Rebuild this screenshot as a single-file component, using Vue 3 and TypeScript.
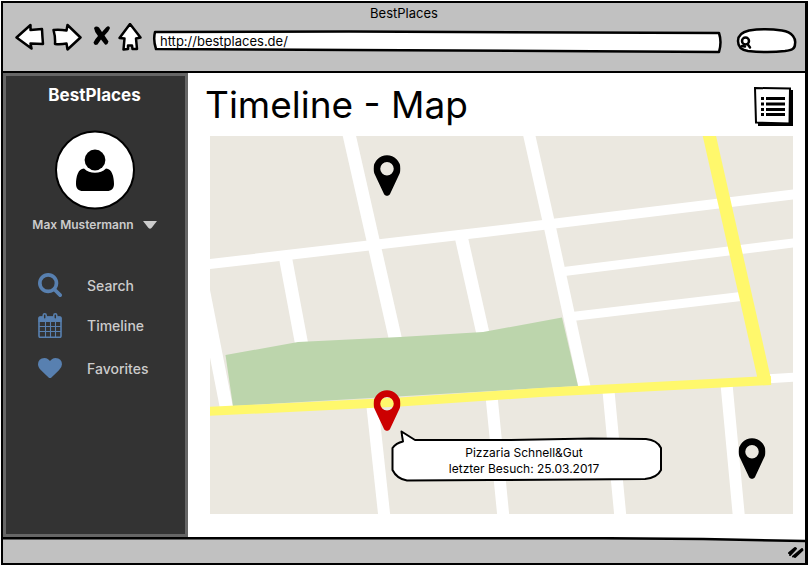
<script setup lang="ts">
import { computed, ref } from 'vue'

interface Place {
  id: number
  label: string
  x: number
  y: number
  lastVisit?: string
}

interface NavItem {
  label: string
  icon: 'search' | 'calendar' | 'heart'
}

const MAP_WIDTH = 583
const MAP_HEIGHT = 378

const url = ref('http://bestplaces.de/')
const query = ref('')

const navGroups: NavItem[][] = [
  [
    { label: 'Search', icon: 'search' },
    { label: 'Timeline', icon: 'calendar' },
  ],
  [{ label: 'Favorites', icon: 'heart' }],
]

const places: Place[] = [
  { id: 1, label: 'Place 1', x: 177, y: 60 },
  { id: 2, label: 'Pizzaria Schnell&Gut', x: 177, y: 295, lastVisit: '25.03.2017' },
  { id: 3, label: 'Place 3', x: 542, y: 343 },
]

const selectedId = ref(2)
const selected = computed(() => places.find((p) => p.id === selectedId.value && p.lastVisit))

const position = (p: Place) => ({
  left: `${(p.x / MAP_WIDTH) * 100}%`,
  top: `${(p.y / MAP_HEIGHT) * 100}%`,
})
</script>

<template>
  <div class="window">
    <header class="chrome">
      <div class="chrome-title">BestPlaces</div>
      <div class="toolbar">
        <button class="tool" type="button" aria-label="Back">
          <svg width="31" height="32" viewBox="15 23 31 32">
            <path class="ink" d="M16.5 37.5 L30.5 25 L30.5 30 L42 29 Q42.3 36 43 44 L30.5 43.5 L31.5 48.5 Q24 43 16.5 37.5Z" />
          </svg>
        </button>
        <button class="tool" type="button" aria-label="Forward">
          <svg width="31" height="32" viewBox="51 23 31 32">
            <path class="ink" d="M53.5 30 Q60 29.5 66.5 30.5 L67.5 25 L80.5 37.5 L67.5 49.5 L66.5 43.5 Q61 44.5 55 44 Q55.5 37 53.5 30Z" />
          </svg>
        </button>
        <button class="tool" type="button" aria-label="Stop">
          <svg width="24" height="32" viewBox="87 23 24 32">
            <path d="M94 28 Q96 25.500 99 27.500 L102 32 L106 27.500 Q109 25 110 28 Q109 31 104.500 35.500 L108.500 41.500 Q107.500 45.500 105 44.500 L101 39.500 L97.500 44.500 Q94 46 93.500 42.500 Q95 39 98 36 Q94.500 32 94 28Z" />
          </svg>
        </button>
        <button class="tool" type="button" aria-label="Home">
          <svg width="28" height="32" viewBox="116 23 28 32">
            <path class="ink" d="M130 24 L140.5 37.5 L136 38.5 L137 49 L132.5 49 L132 45.5 L128 45.5 L128 49 L123.5 49.5 L124.5 38.5 L119.5 38Z" />
          </svg>
        </button>
        <label class="address">
          <svg class="stretch" viewBox="0 0 575 32" preserveAspectRatio="none" aria-hidden="true">
            <path class="ink" d="M6 9 Q4 17 7 26 L200 27 L570 29 Q573 19 570 10 L200 8.5Z" />
          </svg>
          <input v-model="url" type="text" aria-label="Address" />
        </label>
        <label class="finder">
          <svg class="stretch" viewBox="0 0 63 32" preserveAspectRatio="none" aria-hidden="true">
            <path class="ink" d="M14 7.5 Q30 5 47 7.5 C58 9 61 16 60 21 C60 26 57 27 50 28 Q33 30 13 28 C6 27 3 23 3 18 C3 12 7 9 14 7.5Z" />
            <circle class="ink" cx="10.5" cy="18" r="3.5" />
            <path class="ink" d="M12.5 21 L15 24.500 M7 23 L10 23.500" />
          </svg>
          <input v-model="query" type="search" aria-label="Web search" />
        </label>
      </div>
    </header>

    <div class="page">
      <aside class="sidebar">
        <div class="brand">BestPlaces</div>
        <svg class="avatar" width="80" height="80" viewBox="55 130 80 80" role="img" aria-label="Profile picture">
          <ellipse cx="95" cy="170" rx="39" ry="38.5" fill="#fff" stroke="#000" stroke-width="2" />
          <circle cx="95" cy="160" r="10.4" />
          <path d="M84 168.5 Q88.5 172.8 95 172.8 T106 168.5 C112 168.5 114 177 114 184 C114 188.5 111.5 191 107 191 H83 C78.5 191 76 188.5 76 184 C76 177 78 168.5 84 168.5Z" />
        </svg>
        <button class="account" type="button">
          Max Mustermann
          <svg width="14" height="8" viewBox="0 0 14 8" aria-hidden="true">
            <path d="M0 0 H14 L8.5 7 Q7 8.5 5.5 7Z" fill="#ccc" />
          </svg>
        </button>
        <nav class="menu">
          <ul v-for="(group, g) in navGroups" :key="g">
            <li v-for="item in group" :key="item.label">
              <a href="#">
                <svg v-if="item.icon === 'search'" class="icon" viewBox="64 128 1664 1664">
                  <path d="M1216 832q0-185-131.5-316.5t-316.5-131.5-316.5 131.5-131.5 316.5 131.5 316.5 316.5 131.5 316.5-131.5 131.5-316.5zm512 832q0 52-38 90t-90 38q-54 0-90-38l-343-342q-179 124-399 124-143 0-273.5-55.5t-225-150-150-225-55.5-273.5 55.5-273.5 150-225 225-150 273.5-55.5 273.5 55.5 225 150 150 225 55.5 273.5q0 220-124 399l343 343q37 37 37 90z" />
                </svg>
                <svg v-else-if="item.icon === 'calendar'" class="icon" viewBox="0 0 24 25">
                  <path d="M2 3.5 H22 Q23.5 3.5 23.5 5 V9 H0.5 V5 Q0.5 3.5 2 3.5Z" />
                  <g fill="none" stroke="currentColor">
                    <rect x="1" y="4" width="22" height="20.3" rx="1.2" stroke-width="1.6" />
                    <path d="M7.5 8 V24 M12.5 8 V24 M17.5 8 V24 M1 13.5 H23 M1 18.5 H23" stroke-width="1.1" />
                  </g>
                  <g fill="#333" stroke="currentColor" stroke-width="1.5">
                    <rect x="5.2" y="0.8" width="3" height="5.5" rx="1.5" />
                    <rect x="15.8" y="0.8" width="3" height="5.5" rx="1.5" />
                  </g>
                </svg>
                <svg v-else class="icon" viewBox="0 128 1792 1536">
                  <path d="M896 1664q-26 0-44-18l-624-602q-10-8-27.5-26t-55.5-65.5-68-97.5-53.5-121-23.5-138q0-220 127-344t351-124q62 0 126.5 21.5t120 58 95.5 68.5 76 68q36-36 76-68t95.5-68.5 120-58 126.5-21.5q224 0 351 124t127 344q0 221-229 450l-623 600q-18 18-44 18z" />
                </svg>
                {{ item.label }}
              </a>
            </li>
          </ul>
        </nav>
      </aside>

      <main class="content">
        <div class="heading">
          <h1>Timeline - Map</h1>
          <button class="tool" type="button" aria-label="Show as list">
            <svg width="39" height="39" viewBox="754 87 39 39">
              <path d="M758 90 L793 90 L793 126.5 L758 126Z" />
              <path d="M755 88 L790 88.5 L789.5 123.5 L756 122.5Z" fill="#fff" stroke="#000" stroke-width="2" />
              <path d="M761 98.5 H764 M766 98.5 H785 M761 104 H764 M766 104 H785 M761 109.5 H764 M766 109.5 H785 M761 114.5 H764 M766 114.5 H785" stroke="#000" stroke-width="3" />
            </svg>
          </button>
        </div>

        <div class="map">
          <svg class="streets" :viewBox="`0 0 ${MAP_WIDTH} ${MAP_HEIGHT}`" role="img" aria-label="City map">
            <rect width="583" height="378" fill="#ebe8e0" />
            <g fill="none" stroke="#fff" stroke-width="13">
              <path d="M138.5 -4 L187 210" />
              <path d="M162 266 L174.5 382" stroke-width="12" />
              <path d="M318.5 -4 L340.5 94 L375 253" stroke-width="12" />
              <path d="M75.5 122 L92 210" />
              <path d="M251 100 L273.5 200" />
              <path d="M-7 152 L16.5 272" />
              <path d="M281.5 260 L293.5 382 M398.5 255 L410.5 382 M516.5 248 L529 382" stroke-width="12" />
              <path d="M-4 128.5 L275 96 L587 58" stroke-width="10" />
              <path d="M350 136 L587 106.5 M358 181 L535 160 M555 243 L587 241" stroke-width="9" />
            </g>
            <path d="M15.5 219 L88 206 L190 201 L273 196 L352 181.5 L368 250 L23 270Z" fill="#bcd5ac" />
            <g fill="none" stroke="#fff86c">
              <path d="M-4 275.5 L190 266 L330 256.5 L561 244.5" stroke-width="9" />
              <path d="M498.5 -4 L555 246" stroke-width="13" />
            </g>
          </svg>

          <button
            v-for="place in places"
            :key="place.id"
            class="pin"
            :class="{ active: place.id === selectedId }"
            :style="position(place)"
            type="button"
            :aria-label="place.label"
            @click="selectedId = place.id"
          >
            <svg width="27" height="41" viewBox="384 128 1024 1536">
              <path d="M1152 640q0-106-75-181t-181-75-181 75-75 181 75 181 181 75 181-75 75-181zm256 0q0 109-33 179l-364 774q-16 33-47.5 52t-67.5 19-67.5-19-46.5-52l-365-774q-33-70-33-179 0-212 150-362t362-150 362 150 150 362z" />
            </svg>
          </button>

          <div v-if="selected" class="popup" :style="position(selected)">
            <svg class="stretch" viewBox="0 0 272 52" preserveAspectRatio="none" aria-hidden="true">
              <path class="bubble" d="M10.5 1.5 L24 10 L120 10 L200 8.5 L255 9 Q266 10 270 18 V40 Q266 48 254 49 L100 50 L16 50.5 Q6 49 1.5 40 V18 Q5 13 12 11.5 Q11 6 10.5 1.5Z" />
            </svg>
            <p>{{ selected.label }}</p>
            <p>letzter Besuch: {{ selected.lastVisit }}</p>
          </div>
        </div>
      </main>
    </div>

    <footer class="status">
      <svg class="stretch" viewBox="0 0 802 26" preserveAspectRatio="none" aria-hidden="true">
        <path d="M0 0 H802 V4 L700 1.5 L600 0.5Z" fill="#fff" />
        <path class="ink rule" d="M0 1.2 H600 L700 2 L802 4" />
      </svg>
      <svg class="grip" width="18" height="14" viewBox="0 0 18 14" aria-hidden="true">
        <path d="M2 8 L8 3 M3 10 L9 3.5 M6 11.5 L15 4 M8 12 L15.5 5" />
      </svg>
    </footer>
  </div>
</template>

<style>
body {
  margin: 0;
  background: #fff;
}
</style>

<style scoped>
.window {
  box-sizing: border-box;
  display: flex;
  flex-direction: column;
  min-height: calc(100vh - 2px);
  margin: 1px;
  border: 2px solid #000;
  border-right-width: 3px;
  background: #fff;
  color: #000;
  font-family: Inter, "Open Sans", sans-serif;
  font-size: 13px;
}

button {
  padding: 0;
  border: 0;
  background: none;
  color: inherit;
  font: inherit;
  cursor: pointer;
}

svg {
  display: block;
}

.ink {
  fill: #fff;
  stroke: #000;
  stroke-width: 2.5px;
  stroke-linejoin: round;
  stroke-linecap: round;
  vector-effect: non-scaling-stroke;
}

.stretch {
  position: absolute;
  inset: 0;
  width: 100%;
  height: 100%;
}

.chrome {
  padding: 2px 0 16px;
  border-bottom: 2px solid #000;
  background: #c1c1c1;
}

.chrome-title {
  margin-bottom: 2px;
  line-height: 16px;
  text-align: center;
}

.toolbar {
  display: flex;
  gap: 5px;
  padding: 0 7px 0 12px;
}

.address,
.finder {
  position: relative;
  height: 32px;
}

.address {
  flex: 1;
  margin-right: 6px;
}

.finder {
  width: 63px;
}

.address input,
.finder input {
  position: relative;
  box-sizing: border-box;
  width: 100%;
  height: 32px;
  padding: 3px 8px 0 11px;
  border: 0;
  outline: 0;
  background: none;
  font: inherit;
}

.finder input {
  padding-left: 18px;
  appearance: none;
}

.page {
  display: flex;
  flex: 1;
}

.sidebar {
  box-sizing: border-box;
  display: flex;
  flex-direction: column;
  align-items: center;
  width: 185px;
  padding: 8px 2px 0 0;
  border: 3px solid #666;
  background: #333;
  color: #ccc;
}

.brand {
  color: #fff;
  font-size: 17px;
  font-weight: 700;
  line-height: 22px;
}

.avatar {
  margin-top: 24px;
}

.account {
  display: flex;
  align-items: center;
  gap: 9px;
  margin-top: 5px;
  font-size: 12px;
  font-weight: 600;
  line-height: 20px;
}

.menu {
  display: flex;
  flex-direction: column;
  gap: 17px;
  align-self: stretch;
  margin-top: 37px;
  padding-left: 32px;
}

.menu ul {
  display: flex;
  flex-direction: column;
  gap: 14px;
  margin: 0;
  padding: 0;
  list-style: none;
}

.menu a {
  display: flex;
  align-items: center;
  gap: 25px;
  height: 26px;
  color: #ccc;
  font-size: 14px;
  font-weight: 500;
  text-decoration: none;
}

.icon {
  width: 24px;
  max-height: 25px;
  color: #5880b0;
  fill: currentColor;
}

.content {
  flex: 1;
  padding: 14px 12px 22px 17px;
}

.heading {
  display: flex;
  align-items: flex-start;
  justify-content: space-between;
  margin-bottom: 10px;
}

h1 {
  margin: 0;
  font-size: 37px;
  font-weight: 400;
  line-height: 36px;
}

.map {
  position: relative;
  margin-left: 5px;
}

.streets {
  width: 100%;
  height: auto;
}

.pin {
  position: absolute;
  transform: translate(-50%, -100%);
  fill: #000;
}

.pin.active {
  fill: #c00;
}

.popup {
  position: absolute;
  box-sizing: border-box;
  width: 272px;
  margin: -1px 0 0 4px;
  padding: 15px 14px 5px 8px;
  font-size: 12px;
  line-height: 16px;
  text-align: center;
}

.popup p {
  position: relative;
  margin: 0;
}

.bubble {
  fill: #fff;
  stroke: #000;
  stroke-width: 2px;
  stroke-linejoin: round;
}

.status {
  position: relative;
  display: flex;
  align-items: center;
  justify-content: flex-end;
  height: 26px;
  background: #c1c1c1;
}

.rule {
  fill: none;
}

.grip {
  position: relative;
  margin-top: 3px;
  fill: none;
  stroke: #000;
  stroke-width: 2px;
  stroke-linecap: round;
}
</style>
